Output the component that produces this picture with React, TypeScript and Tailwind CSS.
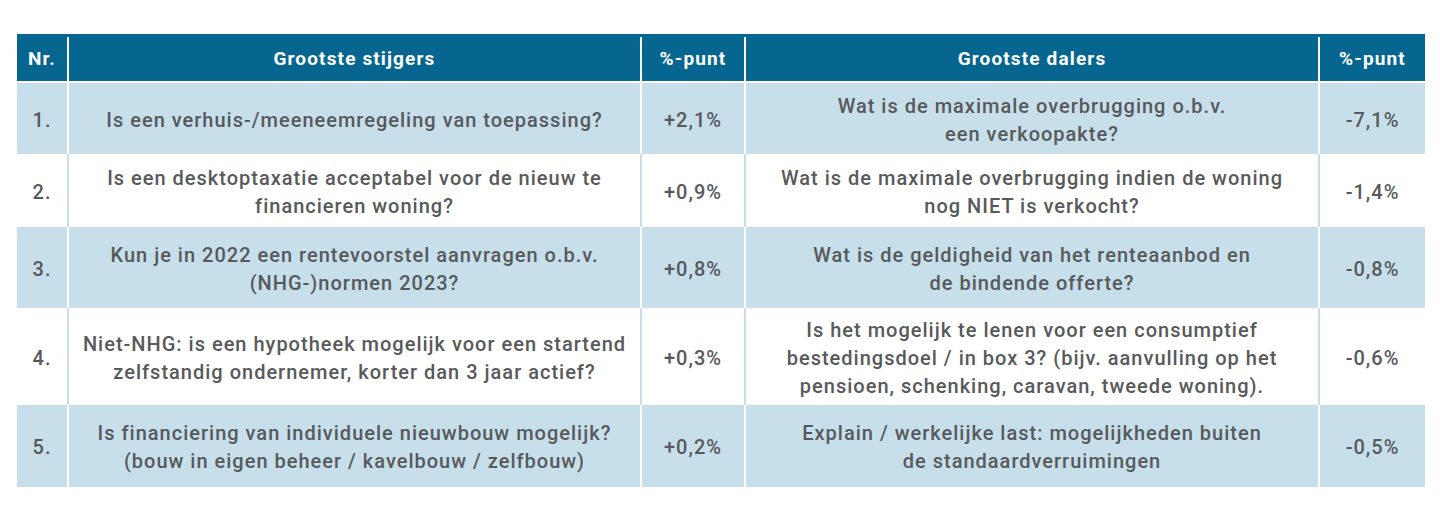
import React from "react";

type Row = {
  nr: string;
  up: string[];
  upPct: string;
  down: string[];
  downPct: string;
  h: string;
  blue: boolean;
};

const rows: Row[] = [
  {
    nr: "1.",
    up: ["Is een verhuis-/meeneemregeling van toepassing?"],
    upPct: "+2,1%",
    down: ["Wat is de maximale overbrugging o.b.v.", "een verkoopakte?"],
    downPct: "-7,1%",
    h: "h-[71px]",
    blue: true,
  },
  {
    nr: "2.",
    up: ["Is een desktoptaxatie acceptabel voor de nieuw te", "financieren woning?"],
    upPct: "+0,9%",
    down: ["Wat is de maximale overbrugging indien de woning", "nog NIET is verkocht?"],
    downPct: "-1,4%",
    h: "h-[73px]",
    blue: false,
  },
  {
    nr: "3.",
    up: ["Kun je in 2022 een rentevoorstel aanvragen o.b.v.", "(NHG-)normen 2023?"],
    upPct: "+0,8%",
    down: ["Wat is de geldigheid van het renteaanbod en", "de bindende offerte?"],
    downPct: "-0,8%",
    h: "h-[81px]",
    blue: true,
  },
  {
    nr: "4.",
    up: [
      "Niet-NHG: is een hypotheek mogelijk voor een startend",
      "zelfstandig ondernemer, korter dan 3 jaar actief?",
    ],
    upPct: "+0,3%",
    down: [
      "Is het mogelijk te lenen voor een consumptief",
      "bestedingsdoel / in box 3? (bijv. aanvulling op het",
      "pensioen, schenking, caravan, tweede woning).",
    ],
    downPct: "-0,6%",
    h: "h-[97px]",
    blue: false,
  },
  {
    nr: "5.",
    up: [
      "Is financiering van individuele nieuwbouw mogelijk?",
      "(bouw in eigen beheer / kavelbouw / zelfbouw)",
    ],
    upPct: "+0,2%",
    down: ["Explain / werkelijke last: mogelijkheden buiten", "de standaardverruimingen"],
    downPct: "-0,5%",
    h: "h-[82px]",
    blue: true,
  },
];

function Lines({ lines }: { lines: string[] }) {
  return (
    <>
      {lines.map((l, i) => (
        <span key={i} className="block whitespace-nowrap">
          {l}
        </span>
      ))}
    </>
  );
}

export default function App() {
  return (
    <div className="w-[1440px] h-[520px] bg-white pt-[34px] pl-[17px] font-['Roboto','Liberation_Sans',sans-serif]">
      <div className="w-[1408px] flex flex-col">
        {/* Header */}
        <div className="flex h-[49px] pt-[3px] bg-[#07668f] text-white font-bold text-[19px] tracking-[0.06em] border-b-2 border-white">
          <div className="w-[50px] flex items-center justify-center">Nr.</div>
          <div className="w-[573px] border-l-2 border-white flex items-center justify-center">
            Grootste stijgers
          </div>
          <div className="w-[104px] border-l-2 border-white flex items-center justify-center">
            %-punt
          </div>
          <div className="w-[574px] border-l-2 border-white flex items-center justify-center">
            Grootste dalers
          </div>
          <div className="w-[107px] border-l-2 border-white flex items-center justify-center">
            %-punt
          </div>
        </div>

        {/* Rows */}
        {rows.map((r) => {
          const sep = r.blue ? "border-white" : "border-[#c7dfeb]";
          return (
            <div
              key={r.nr}
              className={`flex ${r.h} ${r.blue ? "bg-[#c7dfeb]" : "bg-white"} text-[#58595b] font-medium text-[20px] tracking-[0.05em] leading-[28px] text-center`}
            >
              <div className="w-[50px] pt-[2px] flex items-center justify-center">{r.nr}</div>
              <div className={`w-[573px] pt-[2px] border-l-2 ${sep} flex flex-col items-center justify-center`}>
                <Lines lines={r.up} />
              </div>
              <div className={`w-[104px] pt-[2px] border-l-2 ${sep} flex items-center justify-center`}>
                {r.upPct}
              </div>
              <div className={`w-[574px] pt-[2px] border-l-2 ${sep} flex flex-col items-center justify-center`}>
                <Lines lines={r.down} />
              </div>
              <div className={`w-[107px] pt-[2px] border-l-2 ${sep} flex items-center justify-center`}>
                {r.downPct}
              </div>
            </div>
          );
        })}
      </div>
    </div>
  );
}
